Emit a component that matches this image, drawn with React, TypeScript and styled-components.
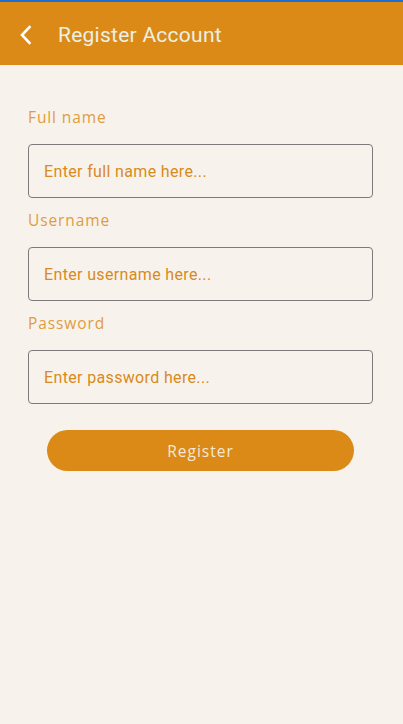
import React from 'react';
import styled, { createGlobalStyle } from 'styled-components';

const GlobalStyle = createGlobalStyle`
  html, body {
    margin: 0;
    padding: 0;
    background: #f7f3ec;
  }
  * {
    box-sizing: border-box;
  }
`;

const Screen = styled.div`
  width: 403px;
  min-height: 724px;
  background: #f7f3ec;
  display: flex;
  flex-direction: column;
`;

const Header = styled.header`
  height: 65px;
  background: #db8a17;
  border-top: 2px solid #1e6fd0;
  display: flex;
  align-items: center;
  padding-left: 14px;
  padding-top: 2px;
  gap: 20px;
`;

const BackButton = styled.button`
  width: 24px;
  height: 24px;
  padding: 0;
  border: none;
  background: transparent;
  display: flex;
  align-items: center;
  justify-content: center;
  cursor: pointer;
`;

const Title = styled.h1`
  margin: 0;
  font-family: Roboto, sans-serif;
  font-weight: 400;
  font-size: 21px;
  letter-spacing: 0.25px;
  color: #eaf1e6;
`;

const Form = styled.form`
  display: flex;
  flex-direction: column;
  padding: 42px 30px 0 28px;
`;

const Field = styled.div<{ $first?: boolean }>`
  display: flex;
  flex-direction: column;
  margin-top: ${(p) => (p.$first ? '0' : '12px')};
`;

const Label = styled.label`
  font-family: 'Open Sans', sans-serif;
  font-weight: 400;
  font-size: 15.5px;
  line-height: 20px;
  color: #e09c40;
  letter-spacing: 0.9px;
  margin-bottom: 17px;
`;

const Input = styled.input`
  height: 54px;
  width: 100%;
  border: 1px solid #7d7a7c;
  border-radius: 4px;
  background: transparent;
  padding: 0 15px;
  font-family: Roboto, sans-serif;
  font-size: 16px;
  letter-spacing: 0.35px;
  color: #d98a1c;
  outline: none;

  &::placeholder {
    color: #d98a1c;
    opacity: 1;
  }
`;

const SubmitButton = styled.button`
  align-self: center;
  margin-top: 26px;
  width: 307px;
  height: 41px;
  border: none;
  border-radius: 21px;
  background: #db8a17;
  font-family: 'Open Sans', sans-serif;
  font-size: 15.5px;
  font-weight: 400;
  color: #f3e8d6;
  letter-spacing: 1px;
  cursor: pointer;
`;

const fields = [
  { label: 'Full name', placeholder: 'Enter full name here...', type: 'text' },
  { label: 'Username', placeholder: 'Enter username here...', type: 'text' },
  { label: 'Password', placeholder: 'Enter password here...', type: 'password' },
];

export default function App() {
  return (
    <>
      <GlobalStyle />
      <Screen>
        <Header>
          <BackButton aria-label="Back">
            <svg width="14" height="20" viewBox="0 0 14 20" fill="none">
              <path d="M10.5 2 L3 10 L10.5 18" stroke="#ffffff" strokeWidth="2.6" strokeLinecap="square" />
            </svg>
          </BackButton>
          <Title>Register Account</Title>
        </Header>
        <Form onSubmit={(e) => e.preventDefault()}>
          {fields.map((f, i) => (
            <Field key={f.label} $first={i === 0}>
              <Label>{f.label}</Label>
              <Input type={f.type} placeholder={f.placeholder} />
            </Field>
          ))}
          <SubmitButton type="submit">Register</SubmitButton>
        </Form>
      </Screen>
    </>
  );
}
